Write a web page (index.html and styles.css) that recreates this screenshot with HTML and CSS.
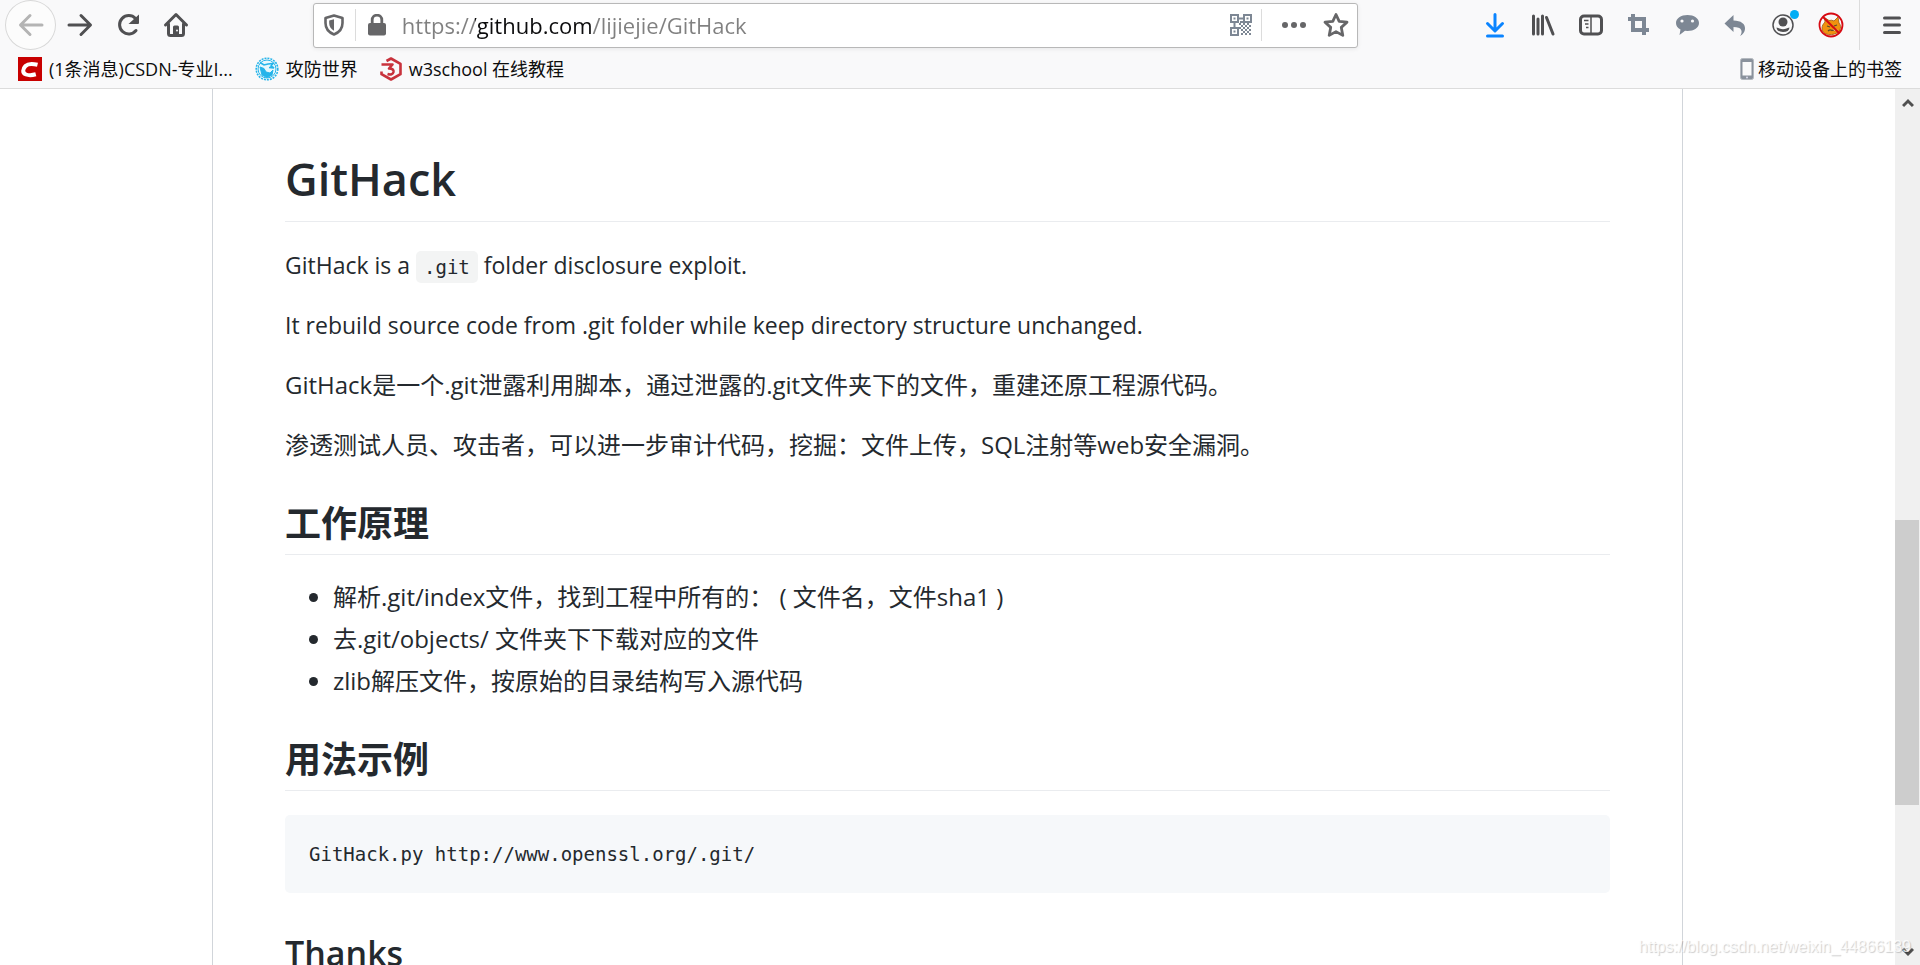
FILE: index.html
```html
<!DOCTYPE html>
<html lang="zh-CN">
<head>
    <meta charset="UTF-8">
    <meta name="viewport" content="width=device-width, initial-scale=1.0">
    <title>lijiejie/GitHack</title>
    <link rel="stylesheet" href="styles.css">
</head>
<body>
    <header class="browser">
        <div class="toolbar">
            <div class="nav">
                <button class="tool back" type="button" aria-label="Back">
                    <svg width="26" height="26" viewBox="0 0 26 26" fill="none" stroke="currentColor" stroke-width="3" stroke-linecap="round" stroke-linejoin="round"><path d="M24 13H3M12 3.5L2.500 13l9.500 9.500"/></svg>
                </button>
                <button class="tool" type="button" aria-label="Forward">
                    <svg width="26" height="26" viewBox="0 0 26 26" fill="none" stroke="currentColor" stroke-width="3" stroke-linecap="round" stroke-linejoin="round"><path d="M2 13h21M14 3.500L23.500 13 14 22.500"/></svg>
                </button>
                <button class="tool" type="button" aria-label="Reload">
                    <svg width="26" height="26" viewBox="0 0 26 26" fill="none" stroke="currentColor" stroke-width="3"><path d="M20.500 6.500A9.200 9.200 0 1 0 21 18.500" stroke-linecap="round"/><path d="M24 2.500v8.500q0 1-1 1h-9.500z" fill="currentColor" stroke="none"/></svg>
                </button>
                <button class="tool" type="button" aria-label="Home">
                    <svg width="26" height="26" viewBox="0 0 26 26" fill="none" stroke="currentColor" stroke-width="3" stroke-linejoin="round" stroke-linecap="round"><path d="M2.500 13L13 2.500 23.500 13"/><path d="M5.500 12v9.500q0 2 2 2h11q2 0 2-2V12"/><path d="M10 23v-8q0-1.500 1.500-1.500h3q1.500 0 1.500 1.500v8z" fill="currentColor" stroke="none"/><circle cx="14" cy="18.500" r="1" fill="#f9f9fa" stroke="none"/></svg>
                </button>
            </div>
            <div class="spacer"></div>
            <form class="urlbar">
                <button class="url-btn shield" type="button" aria-label="Tracking protection">
                    <svg width="20" height="22" viewBox="0 0 20 22"><path d="M10 1.500L18.500 4v5c0 6-3.500 9.500-8.500 11.500C5 18.500 1.500 15 1.500 9V4z" fill="none" stroke="currentColor" stroke-width="2.600" stroke-linejoin="round"/><path d="M10 5.200v11.600C6.800 15 5.200 12.500 5.200 9V6.500z" fill="currentColor"/></svg>
                </button>
                <button class="url-btn lock" type="button" aria-label="Site information">
                    <svg width="18" height="22" viewBox="0 0 18 22"><rect y="9" width="18" height="12.500" rx="2" fill="currentColor"/><path d="M4.200 10V6a4.800 4.800 0 0 1 9.600 0v4" fill="none" stroke="currentColor" stroke-width="2.800"/></svg>
                </button>
                <input class="url-input" type="text" aria-label="Address" value="https://github.com/lijiejie/GitHack">
                <button class="url-btn qr" type="button" aria-label="QR code">
                    <svg width="22" height="22" viewBox="0 0 22 22" fill="none" stroke="#7d8794" stroke-width="2"><path d="M1 1h7v7H1zM14 1h7v7h-7zM1 14h7v7H1z"/><path d="M3.500 4.500h2M16.500 4.500h2M3.500 17.500h2M9 4.500h5M4.500 9v5"/><path d="M9 10h2m2 0h2m2 0h2M11 12h2m2 0h2m2 0h2M9 14h2m2 0h2m2 0h2M11 16h2m2 0h2m2 0h2M13 18h2m2 0h2M11 20h2m2 0h2m2 0h2M10 8h3"/></svg>
                </button>
                <button class="url-btn more" type="button" aria-label="Page actions">
                    <svg width="26" height="8" viewBox="0 0 26 8" fill="currentColor"><circle cx="4" cy="4" r="3"/><circle cx="13" cy="4" r="3"/><circle cx="22" cy="4" r="3"/></svg>
                </button>
                <button class="url-btn" type="button" aria-label="Bookmark this page">
                    <svg width="26" height="26" viewBox="0 0 26 26" fill="none" stroke="currentColor" stroke-width="2.800" stroke-linejoin="round"><path d="M13 2.500l3.200 6.800 7.800.900-5.700 5.200 1.500 8L13 19.600l-6.800 3.800 1.500-8L2 10.200l7.800-.900z"/></svg>
                </button>
            </form>
            <div class="spacer"></div>
            <div class="tools">
                <button class="tool download" type="button" aria-label="Downloads">
                    <svg width="20" height="26" viewBox="0 0 20 26" fill="none" stroke="currentColor" stroke-width="3" stroke-linecap="round" stroke-linejoin="round"><path d="M10 2.500v16M2.500 11.500l7.500 7.500 7.500-7.500M2.500 24h15"/></svg>
                </button>
                <button class="tool" type="button" aria-label="Library">
                    <svg width="24" height="24" viewBox="0 0 24 24" fill="none" stroke="currentColor" stroke-width="3" stroke-linecap="round"><path d="M2.500 3v18M7 6v15M11.500 3v18M15.500 4.500L22 21"/></svg>
                </button>
                <button class="tool" type="button" aria-label="Sidebars">
                    <svg width="26" height="24" viewBox="0 0 26 24" fill="none" stroke="currentColor"><rect x="2.500" y="3" width="21" height="18" rx="3.500" stroke-width="3"/><path d="M13 3v18" stroke-width="1.500"/><path d="M6 7.500h4.500M7 11h3.500M8 14.500h2.500" stroke-width="1.500"/></svg>
                </button>
                <button class="tool addon" type="button" aria-label="Screenshot">
                    <svg width="24" height="24" viewBox="0 0 24 24" fill="none" stroke="currentColor" stroke-width="4"><path d="M6 1v16h16M1 6h16v16"/></svg>
                </button>
                <button class="tool addon" type="button" aria-label="Chat">
                    <svg width="26" height="24" viewBox="0 0 26 24"><path d="M13.500 2C20 2 25 5.400 25 10s-5 8-11.500 8l-2.500-.200L5.500 22l1-5.500C3.500 15 2 12.700 2 10c0-4.600 5-8 11.500-8z" fill="currentColor"/><circle cx="8" cy="8" r="1.600" fill="#f9f9fa"/><circle cx="18.500" cy="8" r="1.600" fill="#f9f9fa"/></svg>
                </button>
                <button class="tool addon" type="button" aria-label="Undo">
                    <svg width="24" height="24" viewBox="0 0 24 24" fill="currentColor"><path d="M10.500 2v5.500C18 7.500 22.500 11 22 16c-.300 3-2 5.500-5 7 1.500-2 2-4 1.200-6-1-2.200-3.500-3-7.700-3v5L1.500 10.500z"/></svg>
                </button>
                <button class="tool account" type="button" aria-label="Account">
                    <svg width="24" height="24" viewBox="0 0 24 24"><circle cx="12" cy="12" r="10" fill="none" stroke="currentColor" stroke-width="1.500"/><circle cx="12" cy="9" r="4.500" fill="currentColor"/><path d="M5.500 14.500q2 .500 3 1 3.500 1.500 7 0 1-.500 3-1-.500 4.500-6.500 4.500t-6.500-4.500z" fill="currentColor"/></svg>
                    <span class="dot"></span>
                </button>
                <button class="tool" type="button" aria-label="FoxyProxy">
                    <svg width="26" height="26" viewBox="0 0 26 26" fill="none"><path d="M4 16c0-2 1-4 3-6l-.500-4.500 4.500 3q3-.800 5 .500L20 5l1 6c2 2 2 5 .500 8-3 3-7 4-11 3.500C6 22 4 19 4 16z" fill="#f0920f" stroke="#a05a10" stroke-width=".800"/><path d="M9 14l3 1M16 14l3-1M10 19q2-2 4-.500 2-1 3 .500" stroke="#5a4a30" stroke-width="1.200"/><path d="M15 16l5 2-4 1z" fill="#f7d9a0"/><circle cx="13" cy="13" r="11.500" stroke="#d70a12" stroke-width="1.800"/><path d="M5 5l16 16" stroke="#d70a12" stroke-width="2"/></svg>
                </button>
            </div>
            <button class="tool menu" type="button" aria-label="Open menu">
                <svg width="18" height="20" viewBox="0 0 18 20" fill="none" stroke="currentColor" stroke-width="3" stroke-linecap="round"><path d="M1.500 3h15M1.500 10h15M1.500 17.500h15"/></svg>
            </button>
        </div>
        <nav class="bookmarks">
            <a class="bookmark" href="#">
                <svg width="24" height="24" viewBox="0 0 24 24"><rect width="24" height="24" fill="#c80000"/><path d="M19.500 7.800c-4-1-9.500-1.300-12 1.200-2.800 2.800-3.500 7 .500 8.500 2.500.900 6.500.700 9.800-.200" fill="none" stroke="#fff" stroke-width="4"/></svg>
                <span>(1条消息)CSDN-专业I...</span>
            </a>
            <a class="bookmark" href="#">
                <svg width="24" height="24" viewBox="0 0 24 24" fill="none" stroke="#25b4ea"><circle cx="12" cy="12" r="10.800" stroke-width="1.600" stroke-dasharray="2 1"/><circle cx="12" cy="12" r="9" fill="#e6f8fd" stroke-width="1"/><path d="M5 5.500l4 2.500 4-1 5-.500-2 2.500 3 2-5-.500" stroke-width="1.600"/><path d="M5 10l4 1.500 2 3.500 4 1 3-3-1 5-5 2.500-5-2.500z" fill="#25b4ea" stroke-width="1"/></svg>
                <span>攻防世界</span>
            </a>
            <a class="bookmark" href="#">
                <svg width="22" height="24" viewBox="0 0 22 24" fill="none" stroke="#c8323c" stroke-width="2.600" stroke-linejoin="round"><path d="M6.500 4L11 1.500l9.500 5.300v10.400L11 22.500l-9.500-5.300V14.500"/><path d="M1.500 7.500h11l-3.500 4q5 0 4.500 3.500-1 3.500-6 2"/></svg>
                <span>w3school 在线教程</span>
            </a>
            <a class="bookmark mobile" href="#">
                <svg width="14" height="22" viewBox="0 0 14 22"><rect x=".500" y=".500" width="13" height="21" rx="2" fill="#8a929c" stroke="#b4b9bf"/><rect x="2.500" y="4" width="9" height="13.500" fill="#fafafa"/><circle cx="7" cy="19.500" r="1" fill="#dde"/></svg>
                <span>移动设备上的书签</span>
            </a>
        </nav>
    </header>

    <div class="viewport">
        <main class="page">
            <article class="readme">
                <h1>GitHack</h1>
                <p class="latin">GitHack is a <code>.git</code> folder disclosure exploit.</p>
                <p class="latin">It rebuild source code from .git folder while keep directory structure unchanged.</p>
                <p>GitHack是一个.git泄露利用脚本，通过泄露的.git文件夹下的文件，重建还原工程源代码。</p>
                <p>渗透测试人员、攻击者，可以进一步审计代码，挖掘：文件上传，SQL注射等web安全漏洞。</p>
                <h2>工作原理</h2>
                <ul>
                    <li>解析.git/index文件，找到工程中所有的： ( 文件名，文件sha1 )</li>
                    <li>去.git/objects/ 文件夹下下载对应的文件</li>
                    <li>zlib解压文件，按原始的目录结构写入源代码</li>
                </ul>
                <h2>用法示例</h2>
                <pre><code>GitHack.py http://www.openssl.org/.git/</code></pre>
                <h2 class="latin-heading">Thanks</h2>
            </article>
        </main>
        <div class="scrollbar">
            <button class="scroll-btn" type="button" aria-label="Scroll up">
                <svg width="12" height="10" viewBox="0 0 12 10" fill="none" stroke="#505050" stroke-width="3"><path d="M1 8l5-5 5 5"/></svg>
            </button>
            <div class="track-before"></div>
            <div class="thumb"></div>
            <div class="track-after"></div>
            <button class="scroll-btn" type="button" aria-label="Scroll down">
                <svg width="12" height="10" viewBox="0 0 12 10" fill="none" stroke="#505050" stroke-width="3"><path d="M1 2l5 5 5-5"/></svg>
            </button>
        </div>
        <div class="watermark">https://blog.csdn.net/weixin_44866139</div>
    </div>
</body>
</html>
```

FILE: styles.css
```css
* {
    box-sizing: border-box;
}
body {
    margin: 0;
    height: 100vh;
    display: flex;
    flex-direction: column;
    overflow: hidden;
    font-family: "Open Sans", "Noto Sans CJK SC", sans-serif;
    color: #24292e;
    background-color: #ffffff;
}
button {
    margin: 0;
    padding: 0;
    border: none;
    background: none;
    color: inherit;
}
svg {
    display: block;
    flex: none;
}

/* browser chrome */
.browser {
    background-color: #f9f9fa;
    border-bottom: 1px solid #dcdcdc;
}
.toolbar {
    display: flex;
    align-items: center;
    height: 50px;
    padding-left: 5px;
    color: #505052;
}
.nav, .tools {
    display: flex;
    align-items: center;
}
.tool {
    display: flex;
    align-items: center;
    justify-content: center;
    position: relative;
    width: 48px;
    height: 48px;
}
.back {
    width: 51px;
    height: 50px;
    border: 1px solid #d8d8d8;
    border-radius: 50%;
    background-color: #fcfcfc;
    color: #b4b4b4;
}
.spacer {
    flex: 113;
}
.urlbar {
    flex: 1045;
    display: flex;
    align-items: center;
    height: 45px;
    border: 1px solid #b8b8b8;
    border-radius: 3px;
    background-color: #ffffff;
    box-shadow: 0 1px 4px rgba(0, 0, 0, 0.08);
    color: #666668;
}
.url-btn {
    display: flex;
    align-items: center;
    justify-content: center;
    width: 42px;
    height: 32px;
}
.shield, .qr {
    border-right: 1px solid #dcdcdc;
}
.lock {
    margin-right: 4px;
}
.more {
    margin-left: 11px;
}
/* the domain part is darker than the rest of the address */
.url-input {
    flex: 1;
    min-width: 0;
    height: 40px;
    padding: 0;
    border: none;
    outline: none;
    font-family: inherit;
    font-size: 22px;
    color: transparent;
    background-image: linear-gradient(to right, #808080 73px, #0c0c0d 73px, #0c0c0d 189px, #808080 189px);
    background-clip: text;
    -webkit-background-clip: text;
}
.download {
    color: #0a84ff;
}
.addon {
    color: #7d8794;
}
.dot {
    position: absolute;
    top: 9px;
    right: 8px;
    width: 9px;
    height: 9px;
    border-radius: 50%;
    background-color: #00adf5;
}
.menu {
    width: 61px;
    height: 50px;
    margin-left: 4px;
    padding-left: 4px;
    border-left: 1px solid #dcdcdc;
}
.bookmarks {
    display: flex;
    align-items: center;
    gap: 22px;
    height: 38px;
    padding: 0 18px;
    font-size: 18px;
    line-height: 24px;
}
.bookmark {
    display: flex;
    align-items: center;
    gap: 7px;
    color: #0c0c0d;
    text-decoration: none;
}
.mobile {
    margin-left: auto;
    gap: 4px;
}

/* page */
.viewport {
    flex: 1;
    min-height: 0;
    display: flex;
    position: relative;
}
.page {
    flex: 1;
    overflow: hidden;
}
.readme {
    max-width: 1471px;
    margin: 0 auto;
    padding: 60px 72px 0;
    border: 1px solid #d1d5da;
    border-width: 0 1px;
    font-size: 24px;
    line-height: 36px;
}
.readme h1 {
    margin: 0 0 25px;
    padding-bottom: 12px;
    border-bottom: 1px solid #eaecef;
    font-size: 45px;
    line-height: 60px;
    font-weight: 600;
}
.readme h2 {
    margin: 38px 0 24px;
    padding-bottom: 8px;
    border-bottom: 1px solid #eaecef;
    font-size: 36px;
    line-height: 45px;
    font-weight: 700;
}
.readme .latin-heading {
    font-size: 34px;
    font-weight: 600;
}
.readme p {
    margin: 0 0 24px;
}
.readme .latin {
    font-size: 23px;
}
.readme ul {
    margin: 0;
    padding-left: 48px;
}
.readme li + li {
    margin-top: 6px;
}
.readme code {
    font-family: "DejaVu Sans Mono", monospace;
    font-size: 19px;
    line-height: 24px;
}
.readme p code {
    padding: 5px 8px;
    border-radius: 5px;
    background-color: #f3f4f4;
}
.readme pre {
    margin: 0;
    padding: 24px;
    border-radius: 5px;
    background-color: #f6f8fa;
}
.readme pre code {
    display: block;
    line-height: 30px;
}

.scrollbar {
    display: flex;
    flex-direction: column;
    width: 25px;
    background-color: #f0f0f0;
}
.scroll-btn {
    display: flex;
    align-items: center;
    justify-content: center;
    height: 27px;
}
.track-before {
    flex: 404;
}
.thumb {
    flex: 285;
    margin-right: 1px;
    background-color: #cdcdcd;
}
.track-after {
    flex: 133;
}
.watermark {
    position: absolute;
    right: 9px;
    bottom: 8px;
    font-family: "Liberation Sans", sans-serif;
    font-size: 16px;
    line-height: 20px;
    color: rgba(255, 255, 255, 0.8);
    text-shadow: 1px 1px 1px rgba(0, 0, 0, 0.2);
}
```
